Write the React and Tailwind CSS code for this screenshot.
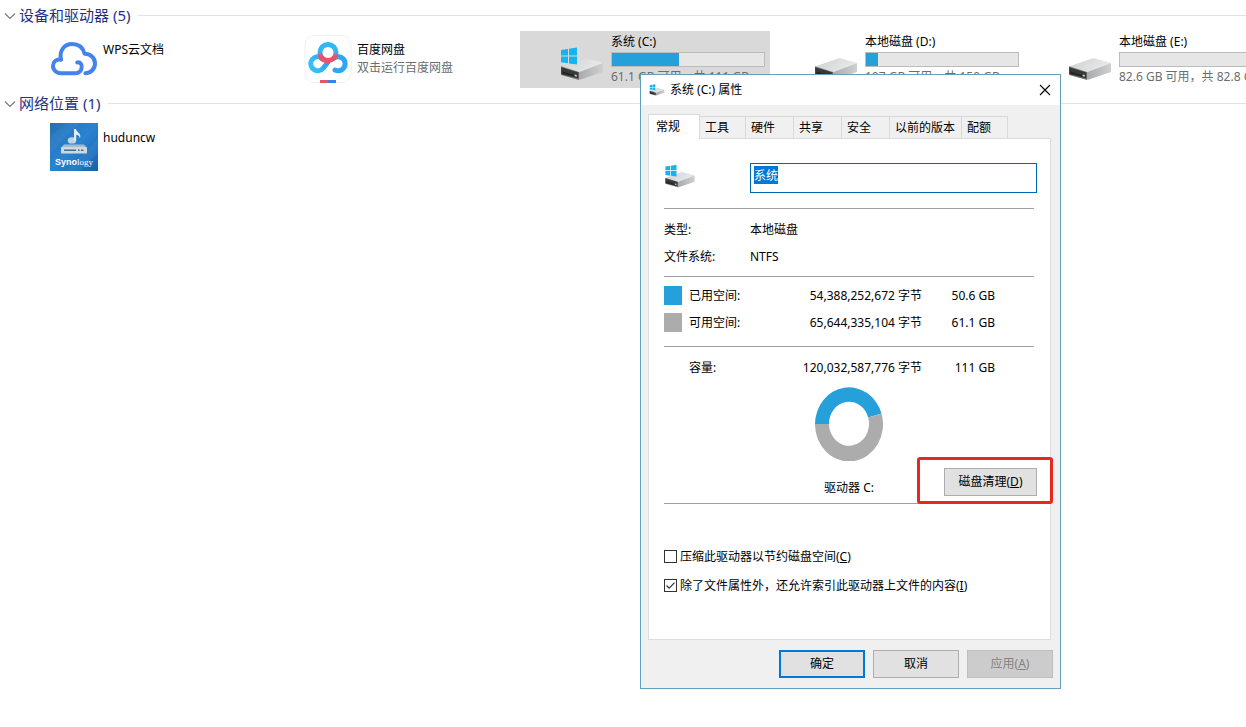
import React, { useEffect, useRef, useState } from "react";

const places = [
  { name: "WPS云文档", icon: "wps" },
  { name: "百度网盘", note: "双击运行百度网盘", icon: "baidu" },
  { name: "系统 (C:)", note: "61.1 GB 可用，共 111 GB", used: 44, icon: "system", selected: true },
  { name: "本地磁盘 (D:)", note: "107 GB 可用，共 150 GB", used: 8, icon: "drive" },
  { name: "本地磁盘 (E:)", note: "82.6 GB 可用，共 82.8 GB", used: 0, icon: "drive" },
];

const tabs = [
  { label: "工具", width: "w-[46px]" },
  { label: "硬件", width: "w-12" },
  { label: "共享", width: "w-12" },
  { label: "安全", width: "w-12" },
  { label: "以前的版本", width: "w-[72px]" },
  { label: "配额", width: "w-[46px]" },
];

const spaceRows = [
  { label: "已用空间:", bytes: "54,388,252,672 字节", size: "50.6 GB", color: "bg-[#26a0da]" },
  { label: "可用空间:", bytes: "65,644,335,104 字节", size: "61.1 GB", color: "bg-[#acacac]" },
];

const capacityRows = [
  { label: "容量:", bytes: "120,032,587,776 字节", size: "111 GB" },
];

function DriveIcon({ system, className, viewBox = "0 0 48 48" }) {
  return (
    <svg viewBox={viewBox} className={className} aria-hidden="true">
      <defs>
        <linearGradient id="driveTop" x1="0" y1="0" x2="1" y2="0.4">
          <stop offset="0" stopColor="#cdced0" />
          <stop offset="1" stopColor="#e9eaeb" />
        </linearGradient>
        <linearGradient id="driveSide" x1="0" y1="0" x2="1" y2="0">
          <stop offset="0" stopColor="#a9aaac" />
          <stop offset="1" stopColor="#cfd0d2" />
        </linearGradient>
      </defs>
      <path d="M3 31.4 26 23.4Q27 23 28 23.3L44 27.4Q45 27.8 44.4 28.2L21 37.4Z" fill="url(#driveTop)" />
      <path d="M21 37.2 45 27.9V36.4Q45 37 44.4 37.2L22 44.8Q21 45 21 44Z" fill="url(#driveSide)" />
      <path d="M3 31.2 21 37V45L4 40.3Q3 40 3 39Z" fill="#77787a" />
      <path d="M3.2 32.2 20.4 37.4V43.6L3.2 39.2Z" fill="#353938" />
      <path d="M4.4 36.6 18 40.4V42L4.4 38.6Z" fill="#222524" />
      <path d="M16.6 39.4 18.8 40V41.8L16.6 41.2Z" fill="#c9d2cb" />
      {system && (
        <path
          d="M3 15 10 14V20.6H3ZM11 13.8 19 12.6V20.6H11ZM3 21.6H10V28.2L3 27.3ZM11 21.6H19V29.4L11 28.4Z"
          fill="#14b4ee"
        />
      )}
    </svg>
  );
}

function CloudIcon() {
  return (
    <svg viewBox="0 0 48 48" className="size-12" aria-hidden="true">
      <g fill="none" stroke="#4583ea" strokeWidth="4" strokeLinecap="round" strokeLinejoin="round">
        <path d="M27.2 27.4C30.6 27 32.4 30 31.6 33.2C31 36.4 28.6 38.2 25.6 38.2H11.2C6.8 38.2 3 35.2 3 31C3 27 6 24 11 24.6" />
        <path d="M11 24.6C9 16 14 9 22.2 9C29.4 9 33.2 13.4 34.6 18.8C40.4 18.8 45 23 45 28.4C45 33.8 41 38 35.4 38.2" />
      </g>
    </svg>
  );
}

function BaiduIcon() {
  return (
    <svg viewBox="0 0 48 48" className="size-12" aria-hidden="true">
      <defs>
        <linearGradient id="ringTop" gradientUnits="userSpaceOnUse" x1="24" y1="8" x2="24" y2="28">
          <stop offset="0.45" stopColor="#2fb8f4" />
          <stop offset="0.65" stopColor="#f0506c" />
        </linearGradient>
        <linearGradient id="ringLeft" gradientUnits="userSpaceOnUse" x1="6" y1="34" x2="26" y2="24">
          <stop offset="0.3" stopColor="#35bdf5" />
          <stop offset="1" stopColor="#2a93ef" />
        </linearGradient>
      </defs>
      <rect x="1" y="0.5" width="46" height="47" rx="9" fill="#fff" stroke="#f0f0f0" />
      <g fill="none" strokeWidth="5" strokeLinecap="round">
        <path d="M24 27 19.2 33.2A7 7 0 1 1 17.6 22.8" stroke="url(#ringLeft)" />
        <path d="M24 27 28.8 33.2" stroke="#fff" strokeWidth="0" />
        <path d="M30.4 22.8A7 7 0 1 1 31 35" stroke="#2fa6f3" />
        <circle cx="24" cy="17.5" r="8" stroke="url(#ringTop)" />
        <path d="M17.4 23.4A8 8 0 0 0 24 25.5" stroke="#f0506c" />
      </g>
      <path d="M16 45H24V48H16Z" fill="#e5506c" />
      <path d="M24 45H32V48H24Z" fill="#3186e4" />
    </svg>
  );
}

function SynologyIcon() {
  return (
    <svg viewBox="0 0 48 48" className="size-12" aria-hidden="true">
      <defs>
        <linearGradient id="nasBg" x1="0" y1="0" x2="1" y2="1">
          <stop offset="0" stopColor="#256fb0" />
          <stop offset="0.5" stopColor="#2a83d0" />
          <stop offset="1" stopColor="#1762a8" />
        </linearGradient>
      </defs>
      <rect width="48" height="48" fill="url(#nasBg)" />
      <path d="M0 14 16 0H30L0 30ZM48 16V30L30 48H16Z" fill="#4b9ce0" opacity="0.2" />
      <ellipse cx="22" cy="17.4" rx="4.2" ry="3.2" fill="#c3d5e2" />
      <path d="M24 6H26C26.5 9.6 31.6 9.6 30 15.6C29.4 12.4 27.6 12 26.2 12V17.4H24Z" fill="#e2edf5" />
      <path d="M14 21.6H34L37 25H11Z" fill="#a3bdd0" />
      <rect x="11" y="24" width="26" height="6.6" rx="1" fill="#ccd9e2" />
      <path d="M14 26.4H26V28H14ZM28 26.4H29.6V28H28ZM31 26.4H33.4V28H31Z" fill="#3f6e93" />
      <text x="24" y="41.6" textAnchor="middle" fill="#fff" fontSize="9" fontFamily="Liberation Sans, sans-serif">
        <tspan fontWeight="bold">Syno</tspan>
        <tspan fontFamily="Liberation Serif, serif">logy</tspan>
      </text>
    </svg>
  );
}

function PlaceIcon({ type }) {
  if (type === "wps") return <CloudIcon />;
  if (type === "baidu") return <BaiduIcon />;
  if (type === "synology") return <SynologyIcon />;
  return <DriveIcon system={type === "system"} className="size-12" />;
}

function GroupHeader({ title }) {
  return (
    <h2 className="flex h-[31px] items-center pl-1 text-[15px] leading-5 text-[#1e3287]">
      <svg viewBox="0 0 12 8" className="mr-[3px] h-2 w-3 shrink-0" aria-hidden="true">
        <path d="M1 1.5 6 6.5 11 1.5" fill="none" stroke="#7a7a7a" strokeWidth="1.2" />
      </svg>
      <span className="shrink-0 pb-0.5">{title}</span>
      <span className="ml-2 h-px flex-1 bg-[#e2e2e2]" />
    </h2>
  );
}

function Place({ place }) {
  const isDrive = place.used !== undefined;

  return (
    <li
      className={`flex h-[57px] w-[250px] shrink-0 gap-[5px] pl-[38px] ${
        place.selected ? "bg-[#d9d9d9]" : ""
      }`}
    >
      <div className="shrink-0 pt-1">
        <PlaceIcon type={place.icon} />
      </div>
      <div className={`whitespace-nowrap leading-[18px] ${isDrive ? "pt-[2px]" : "pt-2.5"}`}>
        <p>{place.name}</p>
        {isDrive && (
          <div className="my-px h-[15px] w-[154px] border border-[#bcbcbc] bg-[#e6e6e6]">
            <div className="h-full bg-[#26a0da]" style={{ width: `${place.used}%` }} />
          </div>
        )}
        {place.note && <p className="text-[#6d6d6d]">{place.note}</p>}
      </div>
    </li>
  );
}

function SpaceTable({ rows }) {
  return (
    <table className="w-[331px] table-fixed">
      <colgroup>
        <col className="w-[25px]" />
        <col className="w-[87px]" />
        <col className="w-[146px]" />
        <col className="w-[73px]" />
      </colgroup>
      <tbody>
        {rows.map((row) => (
          <tr key={row.label} className="h-[27px]">
            <td className="p-0">
              {row.color && <div className={`h-[19px] w-[18px] ${row.color}`} />}
            </td>
            <th scope="row" className="p-0 text-left font-normal">{row.label}</th>
            <td className="p-0 text-right">{row.bytes}</td>
            <td className="p-0 text-right">{row.size}</td>
          </tr>
        ))}
      </tbody>
    </table>
  );
}

function UsageChart() {
  return (
    <svg viewBox="0 0 68 74" className="h-[74px] w-[68px]" role="img" aria-label="驱动器 C:">
      <path
        d="M0 37A34 37 0 0 1 66.5 26.5L53.2 30.6A20 22 0 0 0 14 37Z"
        fill="#26a0da"
      />
      <path
        d="M0 37A34 37 0 1 0 66.5 26.5L53.2 30.6A20 22 0 1 1 14 37Z"
        fill="#acacac"
      />
    </svg>
  );
}

function Rule() {
  return <hr className="mr-[3px] border-t border-[#a0a0a0]" />;
}

function Option({ id, checked, onChange, children }) {
  return (
    <div className="flex h-[29px] items-center gap-[3px]">
      <span className="relative size-[13px] shrink-0">
        <input
          id={id}
          type="checkbox"
          checked={checked}
          onChange={(e) => onChange(e.target.checked)}
          className="block size-[13px] appearance-none border border-[#333] bg-white"
        />
        {checked && (
          <svg viewBox="0 0 13 13" className="pointer-events-none absolute inset-0 size-[13px]" aria-hidden="true">
            <path d="M2.5 6.5 5.2 9.2 10.5 3.6" fill="none" stroke="#333" strokeWidth="1.2" />
          </svg>
        )}
      </span>
      <label htmlFor={id}>{children}</label>
    </div>
  );
}

function PropertiesDialog() {
  const [label, setLabel] = useState("系统");
  const [compress, setCompress] = useState(false);
  const [indexed, setIndexed] = useState(true);
  const labelRef = useRef(null);

  useEffect(() => {
    labelRef.current?.focus();
    labelRef.current?.select();
  }, []);

  return (
    <section
      role="dialog"
      aria-label="系统 (C:) 属性"
      className="absolute top-[74px] left-[640px] w-[421px] border border-[#62a0bd] bg-[#f0f0f0]"
    >
      <header className="flex h-[30px] items-center bg-white pr-2 pl-2">
        <DriveIcon system className="size-4" viewBox="1 6 46 46" />
        <h1 className="ml-[5px] flex-1">系统 (C:) 属性</h1>
        <button type="button" aria-label="关闭" className="p-px">
          <svg viewBox="0 0 12 12" className="size-3" aria-hidden="true">
            <path d="M1 1 11 11M11 1 1 11" fill="none" stroke="#000" strokeWidth="1.1" />
          </svg>
        </button>
      </header>

      <div className="border-l-[3px] border-[#e6f1fa] pt-[9px] pr-[9px] pb-[10px] pl-1">
        <div role="tablist" className="flex items-end">
          <button
            type="button"
            role="tab"
            aria-selected="true"
            className="relative z-10 -mb-px h-[25px] w-[52px] border border-b-0 border-[#d9d9d9] bg-white pl-[7px] text-left"
          >
            常规
          </button>
          {tabs.map((tab) => (
            <button
              key={tab.label}
              type="button"
              role="tab"
              aria-selected="false"
              className={`h-[22px] border-t border-r border-[#d9d9d9] pl-[5px] text-left whitespace-nowrap ${tab.width}`}
            >
              {tab.label}
            </button>
          ))}
        </div>

        <div role="tabpanel" className="border border-[#dcdcdc] bg-white pt-6 pr-[13px] pb-[39px] pl-[15px]">
          <div className="mb-[15px] flex h-[30px]">
            <div className="w-[86px] shrink-0">
              <DriveIcon system className="size-8" viewBox="1 10 46 46" />
            </div>
            <input
              ref={labelRef}
              type="text"
              aria-label="卷标"
              value={label}
              onChange={(e) => setLabel(e.target.value)}
              className="h-[30px] min-w-0 flex-1 border border-[#0067b4] bg-white px-[3px] pb-1.5 outline-none selection:bg-[#0078d7] selection:text-white"
            />
          </div>
          <Rule />

          <dl className="grid grid-cols-[86px_1fr] pt-[7px] pb-1.5 leading-[27px]">
            <dt>类型:</dt>
            <dd>本地磁盘</dd>
            <dt>文件系统:</dt>
            <dd>NTFS</dd>
          </dl>
          <Rule />

          <div className="pt-[5px] pb-2.5">
            <SpaceTable rows={spaceRows} />
          </div>
          <Rule />

          <div className="pt-[7px]">
            <SpaceTable rows={capacityRows} />
          </div>
          <div className="grid grid-cols-[1fr_68px_1fr] pt-1.5 pb-[7px]">
            <div className="col-start-2 mr-[3px] flex flex-col items-center whitespace-nowrap">
              <UsageChart />
              <p className="mt-[19px]">驱动器 C:</p>
            </div>
            <div className="relative self-end justify-self-end">
              <button type="button" className="h-7 w-[93px] border border-[#adadad] bg-[#e1e1e1]">
                磁盘清理(<u>D</u>)
              </button>
              <span className="pointer-events-none absolute -top-[11px] -right-4 -bottom-2 -left-[27px] rounded-[3px] border-[3px] border-[#e8281e]" />
            </div>
          </div>
          <Rule />

          <div className="pt-[38px]">
            <Option id="compress" checked={compress} onChange={setCompress}>
              压缩此驱动器以节约磁盘空间(<u>C</u>)
            </Option>
            <Option id="indexed" checked={indexed} onChange={setIndexed}>
              除了文件属性外，还允许索引此驱动器上文件的内容(<u>I</u>)
            </Option>
          </div>
        </div>

        <footer className="-mr-[2px] flex justify-end gap-2 pt-2.5">
          <button type="button" className="h-7 w-[86px] border-2 border-[#0078d7] bg-[#e1e1e1]">
            确定
          </button>
          <button type="button" className="h-7 w-[86px] border border-[#adadad] bg-[#e1e1e1]">
            取消
          </button>
          <button type="button" disabled className="h-7 w-[86px] border border-[#bfbfbf] bg-[#cccccc] text-[#838383]">
            应用(<u>A</u>)
          </button>
        </footer>
      </div>
    </section>
  );
}

function App() {
  return (
    <main className="relative min-h-screen overflow-hidden bg-white font-['Noto_Sans','Noto_Sans_CJK_SC',sans-serif] text-xs text-black">
      <GroupHeader title="设备和驱动器 (5)" />
      <ul className="flex gap-1 pl-3">
        {places.map((place) => (
          <Place key={place.name} place={place} />
        ))}
      </ul>
      <GroupHeader title="网络位置 (1)" />
      <ul className="flex pl-3">
        <Place place={{ name: "huduncw", icon: "synology" }} />
      </ul>
      <PropertiesDialog />
    </main>
  );
}

export default App;
